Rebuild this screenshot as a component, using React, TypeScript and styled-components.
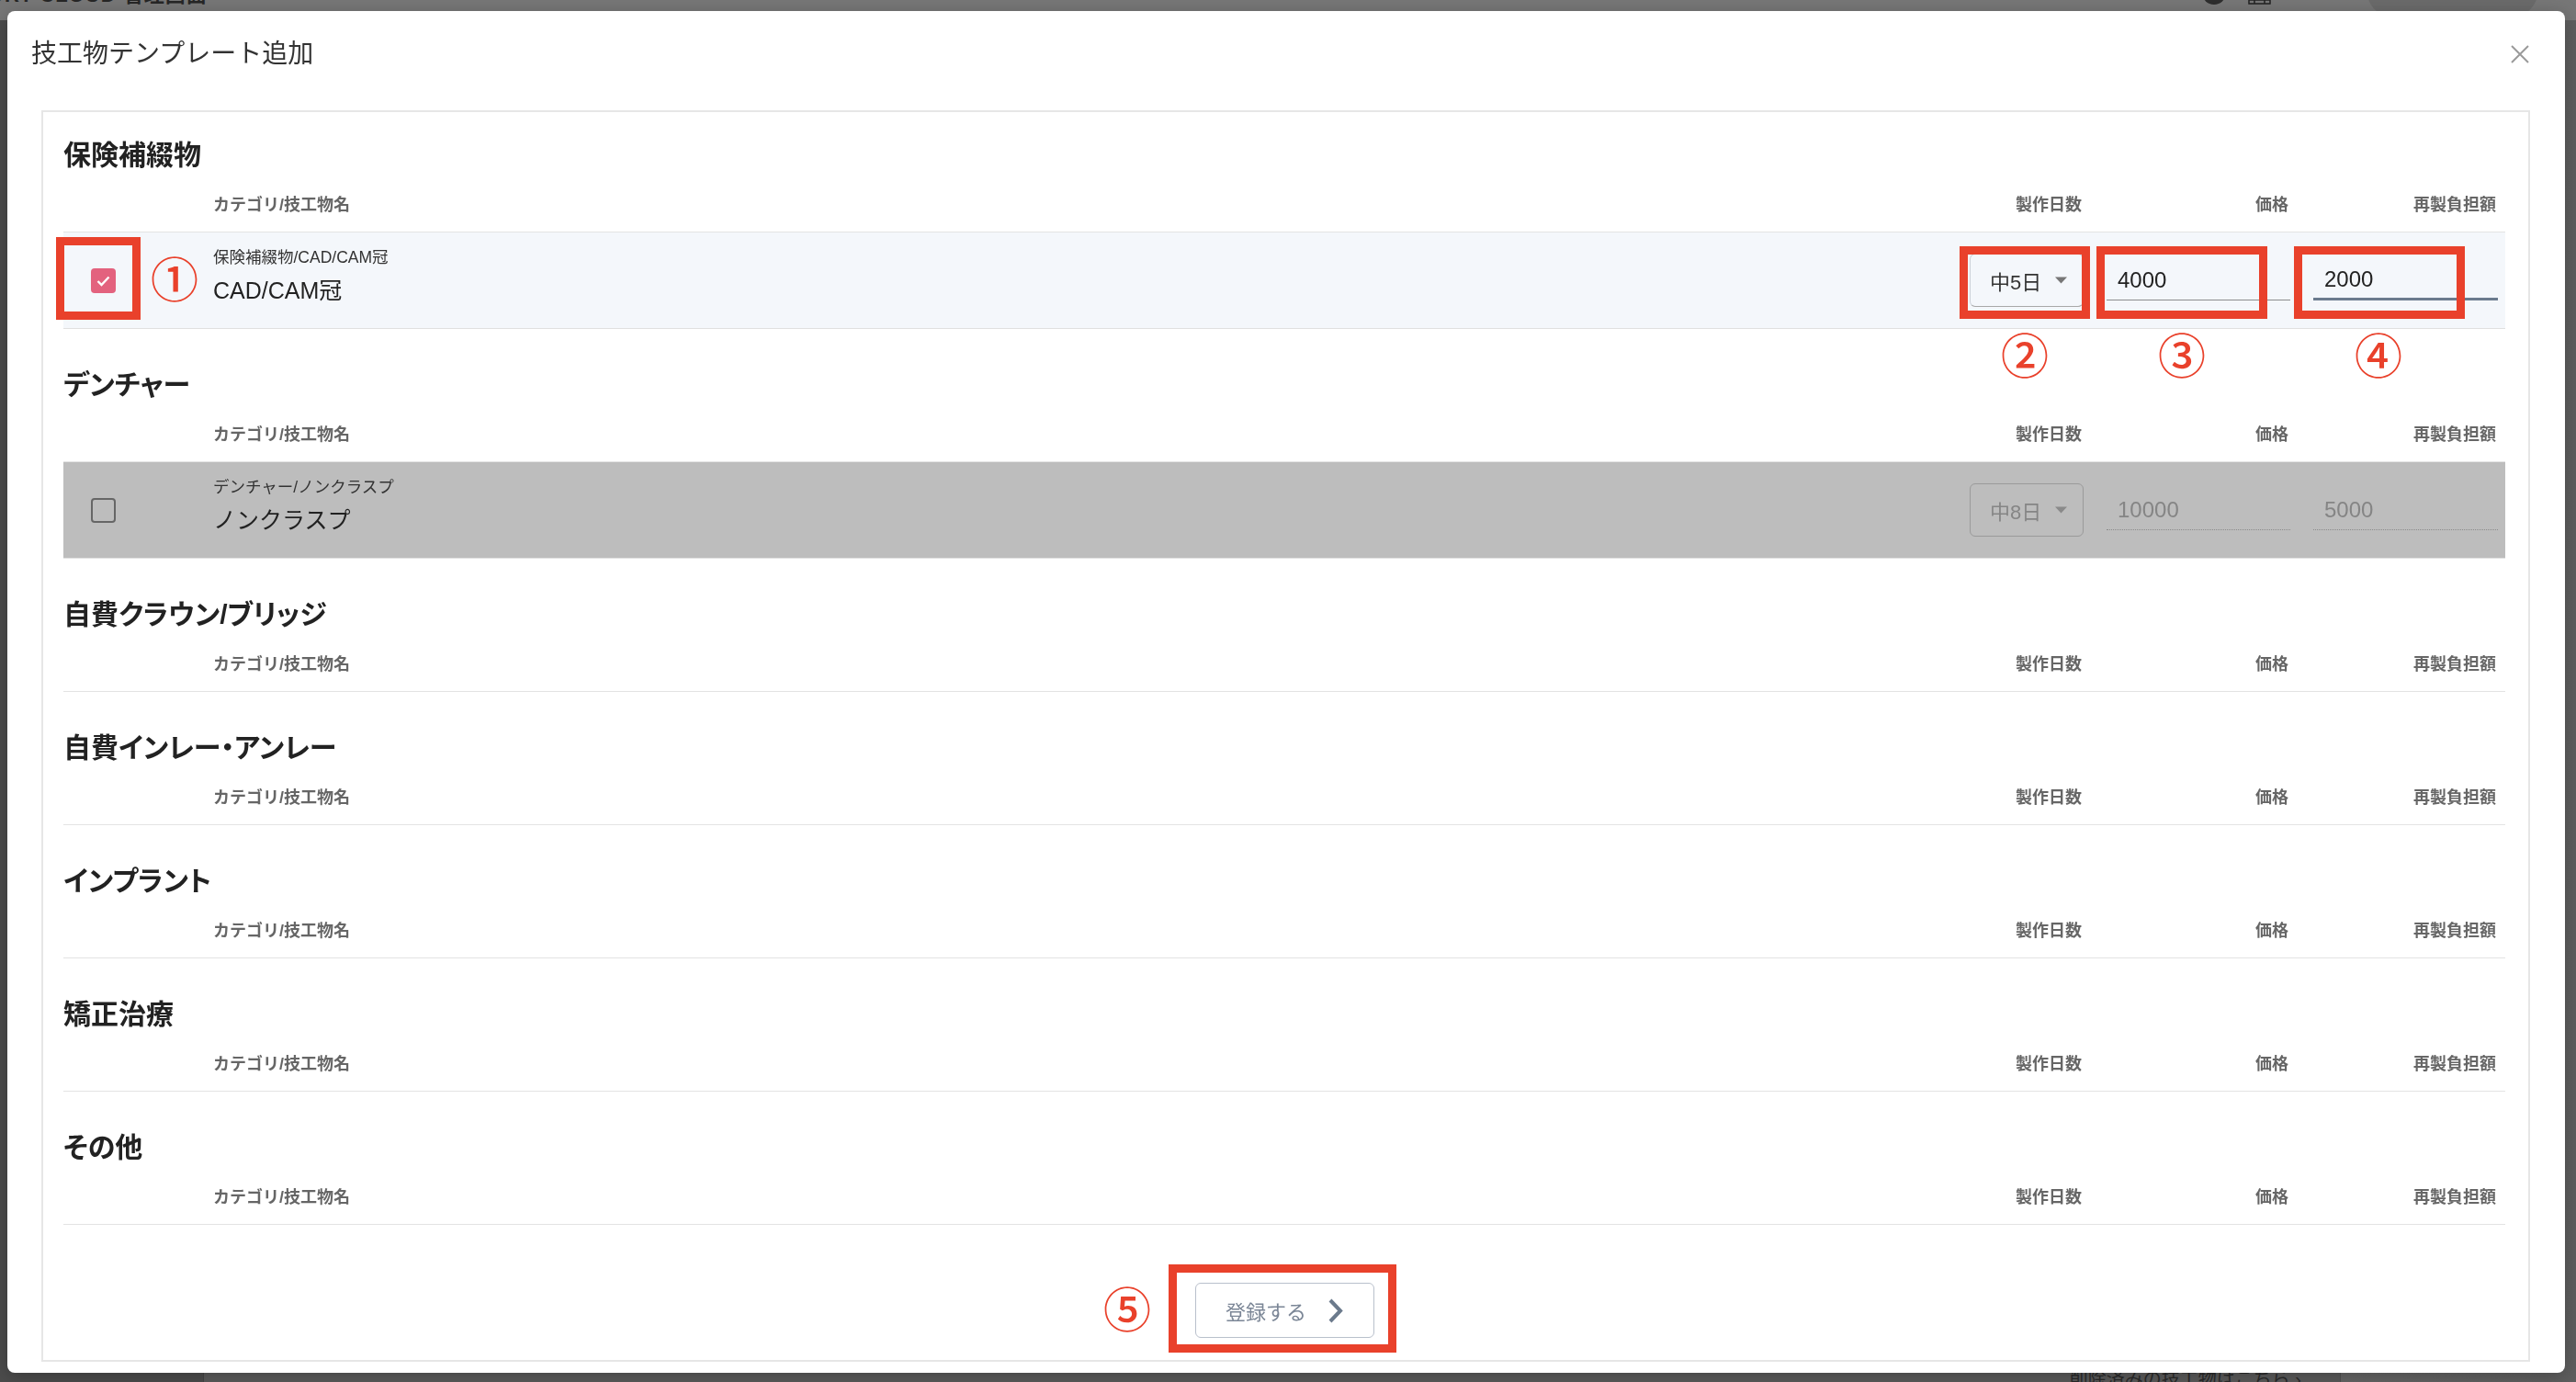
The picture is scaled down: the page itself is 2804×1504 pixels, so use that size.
import React from 'react';
import styled, { createGlobalStyle } from 'styled-components';

const GlobalStyle = createGlobalStyle`
  html, body {
    margin: 0;
    padding: 0;
  }
  body {
    font-family: "Liberation Sans", "Noto Sans CJK JP", sans-serif;
    background: #5b5b5b;
    overflow: hidden;
  }
  * {
    box-sizing: border-box;
  }
`;

type Item = {
  category: string;
  name: string;
  days: string;
  price: string;
  remake: string;
  checked: boolean;
};

type Section = {
  title: string;
  items: Item[];
};

const sections: Section[] = [
  {
    title: '保険補綴物',
    items: [
      { category: '保険補綴物/CAD/CAM冠', name: 'CAD/CAM冠', days: '中5日', price: '4000', remake: '2000', checked: true },
    ],
  },
  {
    title: 'デンチャー',
    items: [
      { category: 'デンチャー/ノンクラスプ', name: 'ノンクラスプ', days: '中8日', price: '10000', remake: '5000', checked: false },
    ],
  },
  { title: '自費クラウン/ブリッジ', items: [] },
  { title: '自費インレー・アンレー', items: [] },
  { title: 'インプラント', items: [] },
  { title: '矯正治療', items: [] },
  { title: 'その他', items: [] },
];

/* ---------- page behind the modal ---------- */

const Page = styled.div`
  display: grid;
  grid-template-rows: auto 1fr;
  height: 100vh;
`;

const TopBar = styled.header`
  display: flex;
  align-items: center;
  height: 60px;
  margin-top: -38px;
  padding: 0 42px 0 0;
  background: #777;
`;

const Brand = styled.div`
  margin-right: auto;
  margin-left: -12px;
  font-size: 22px;
  font-weight: 700;
  letter-spacing: 1px;
  color: #262626;
`;

const InfoDot = styled.span`
  width: 26px;
  height: 26px;
  border-radius: 50%;
  background: #2e2e2e;
`;

const BagIcon = styled.svg`
  margin-left: 23px;
`;

const UserPill = styled.div`
  width: 185px;
  height: 50px;
  margin-left: 104px;
  border-radius: 25px;
  background: #6b6b6b;
`;

const Workspace = styled.div`
  display: grid;
  grid-template-columns: 222px 1fr 256px;
`;

const SideNav = styled.aside`
  background: #4c4c4c;
  border-right: 1px solid #444;
`;

const MainArea = styled.main`
  display: flex;
  align-items: flex-end;
  justify-content: flex-end;
  padding: 0 42px 0 0;
  background: #5b5b5b;
  border-right: 1px solid #505050;
`;

const DeletedLink = styled.span`
  font-size: 20px;
  line-height: 24px;
  color: #2a2a2a;
  transform: translateY(9px);
`;

const RightPanel = styled.aside`
  background: linear-gradient(90deg, #666 0%, #5e5e5e 100%);
`;

/* ---------- modal ---------- */

const Overlay = styled.div`
  position: fixed;
  inset: 0;
  padding: 12px 12px 10px 8px;
`;

const Modal = styled.section`
  display: flex;
  flex-direction: column;
  height: 100%;
  background: #fff;
  border-radius: 8px;
  box-shadow: 0 4px 20px rgba(0, 0, 0, 0.25);
`;

const ModalHeader = styled.div`
  flex: none;
  display: flex;
  justify-content: space-between;
  align-items: flex-start;
  height: 108px;
  padding: 27px 36px 0 26px;
`;

const ModalTitle = styled.h2`
  margin: 0;
  font-size: 28px;
  line-height: 40px;
  font-weight: 400;
  color: #333;
`;

const CloseButton = styled.button`
  width: 26px;
  height: 26px;
  margin-top: 7px;
  padding: 0;
  border: 0;
  background: none;
  cursor: pointer;
`;

const ModalBody = styled.div`
  flex: 1;
  display: flex;
  flex-direction: column;
  margin: 0 38px 12px 37px;
  padding: 25px 25px 24px 22px;
  border: 2px solid #e6e6e6;
`;

const SectionBlock = styled.div`
  & + & {
    margin-top: 39px;
  }
`;

const SectionTitle = styled.h3`
  margin: 0 0 10px;
  font-size: 30px;
  line-height: 44px;
  font-weight: 700;
  color: #222;
  font-feature-settings: "palt";
`;

const Grid = styled.div`
  display: grid;
  grid-template-columns: 138px 1fr 124px 200px 201px;
  column-gap: 25px;
  padding-right: 8px;
`;

const HeaderRow = styled(Grid)`
  height: 52px;
  padding-bottom: 11px;
  align-items: center;
  border-bottom: 1px solid #e3e3e3;
`;

const HeaderCell = styled.div<{ $right?: boolean }>`
  font-size: 18px;
  font-weight: 700;
  color: #666;
  text-align: ${(p) => (p.$right ? 'right' : 'left')};
  padding-right: ${(p) => (p.$right ? '2px' : '0')};
`;

const ItemRow = styled(Grid)<{ $active: boolean }>`
  height: 105px;
  align-items: center;
  background: ${(p) => (p.$active ? '#f4f7fb' : '#bdbdbd')};
  border-bottom: 1px solid #e0e0e0;
`;

const CheckCell = styled.div`
  padding-left: 30px;
  display: flex;
`;

const CheckBox = styled.span<{ $checked: boolean }>`
  display: flex;
  align-items: center;
  justify-content: center;
  width: 27px;
  height: 27px;
  border-radius: 4px;
  background: ${(p) => (p.$checked ? '#e3627e' : 'transparent')};
  border: ${(p) => (p.$checked ? 'none' : '2px solid #666')};
`;

const NameCell = styled.div`
  align-self: start;
  padding-top: 15px;
`;

const Category = styled.div`
  font-size: 17.5px;
  line-height: 24px;
  color: #333;
`;

const ItemName = styled.div`
  margin-top: 7px;
  font-size: 25px;
  line-height: 34px;
  color: #222;
`;

const DaysSelect = styled.div<{ $disabled: boolean }>`
  display: flex;
  align-items: center;
  gap: 15px;
  height: 58px;
  padding-left: 21px;
  border-radius: 6px;
  border: 1px solid ${(p) => (p.$disabled ? '#9a9a9a' : '#ccd1d8')};
  border-bottom-color: ${(p) => (p.$disabled ? '#9a9a9a' : '#a8a8a8')};
  font-size: 22px;
  color: ${(p) => (p.$disabled ? '#858585' : '#333')};
`;

const TextInput = styled.input<{ $focused?: boolean }>`
  width: 100%;
  height: 44px;
  padding: 0 0 0 12px;
  border: 0;
  border-bottom: ${(p) =>
    p.$focused ? '3px solid #6b7b8e' : p.disabled ? '1px dotted #8a8a8a' : '1px solid #8c8c8c'};
  background: transparent;
  font-family: inherit;
  font-size: 24px;
  color: ${(p) => (p.disabled ? '#858585' : '#222')};
  outline: none;
`;

const Footer = styled.div`
  display: flex;
  justify-content: center;
  padding-top: 63px;
`;

const SubmitButton = styled.button`
  display: flex;
  align-items: center;
  justify-content: center;
  gap: 23px;
  width: 195px;
  height: 60px;
  border: 1px solid #b9c0cc;
  border-radius: 6px;
  background: #fff;
  font-family: inherit;
  font-size: 22px;
  color: #7b8696;
  cursor: pointer;
`;

/* ---------- red annotation marks ---------- */

const MarkBox = styled.div<{ $x: number; $y: number; $w: number; $h: number }>`
  position: absolute;
  left: ${(p) => p.$x}px;
  top: ${(p) => p.$y}px;
  width: ${(p) => p.$w}px;
  height: ${(p) => p.$h}px;
  border: 9px solid #e9412b;
  pointer-events: none;
`;

const MarkNumber = styled.span<{ $x: number; $y: number }>`
  position: absolute;
  left: ${(p) => p.$x}px;
  top: ${(p) => p.$y}px;
  transform: translate(-50%, -50%);
  font-family: "Noto Sans CJK JP", sans-serif;
  font-size: 52px;
  font-weight: 500;
  line-height: 1;
  color: #e9412b;
  pointer-events: none;
`;

const Caret = ({ color }: { color: string }) => (
  <svg width="13" height="8" viewBox="0 0 13 8">
    <path d="M0 0.5 H13 L6.5 7.5 Z" fill={color} />
  </svg>
);

const ItemLine: React.FC<{ item: Item }> = ({ item }) => {
  const off = !item.checked;
  return (
    <ItemRow $active={item.checked}>
      <CheckCell>
        <CheckBox $checked={item.checked}>
          {item.checked && (
            <svg width="27" height="27" viewBox="0 0 27 27">
              <polyline points="7.5,14 11.5,18 19.5,9.5" fill="none" stroke="#fff" strokeWidth="2.4" />
            </svg>
          )}
        </CheckBox>
      </CheckCell>
      <NameCell>
        <Category>{item.category}</Category>
        <ItemName>{item.name}</ItemName>
      </NameCell>
      <DaysSelect $disabled={off}>
        {item.days}
        <Caret color={off ? '#8a8a8a' : '#777'} />
      </DaysSelect>
      <TextInput defaultValue={item.price} disabled={off} />
      <TextInput defaultValue={item.remake} disabled={off} $focused={item.checked} />
    </ItemRow>
  );
};

const App: React.FC = () => {
  return (
    <>
      <GlobalStyle />
      <Page>
        <TopBar>
          <Brand>DRY CLOUD 管理画面</Brand>
          <InfoDot />
          <BagIcon width="27" height="26" viewBox="0 0 27 26">
            <path d="M2 25 V14 Q13.5 4 25 14 V25 Z M2 21 H25 M8 21 V25 M19 21 V25" fill="none" stroke="#222" strokeWidth="1.5" />
          </BagIcon>
          <UserPill />
        </TopBar>
        <Workspace>
          <SideNav />
          <MainArea>
            <DeletedLink>削除済みの技工物はこちら ›</DeletedLink>
          </MainArea>
          <RightPanel />
        </Workspace>
      </Page>

      <Overlay>
        <Modal>
          <ModalHeader>
            <ModalTitle>技工物テンプレート追加</ModalTitle>
            <CloseButton aria-label="close">
              <svg width="26" height="26" viewBox="0 0 26 26">
                <path d="M4 4 L22 22 M22 4 L4 22" stroke="#9a9a9a" strokeWidth="2" />
              </svg>
            </CloseButton>
          </ModalHeader>
          <ModalBody>
            {sections.map((s) => (
              <SectionBlock key={s.title}>
                <SectionTitle>{s.title}</SectionTitle>
                <HeaderRow>
                  <span />
                  <HeaderCell>カテゴリ/技工物名</HeaderCell>
                  <HeaderCell $right>製作日数</HeaderCell>
                  <HeaderCell $right>価格</HeaderCell>
                  <HeaderCell $right>再製負担額</HeaderCell>
                </HeaderRow>
                {s.items.map((it) => (
                  <ItemLine key={it.name} item={it} />
                ))}
              </SectionBlock>
            ))}
            <Footer>
              <SubmitButton>
                登録する
                <svg width="17" height="27" viewBox="0 0 17 27">
                  <polyline points="3,2 14,13.5 3,25" fill="none" stroke="#6b7a8c" strokeWidth="4" />
                </svg>
              </SubmitButton>
            </Footer>
          </ModalBody>
        </Modal>

        <MarkBox $x={61} $y={258} $w={92} $h={90} />
        <MarkNumber $x={190} $y={302}>①</MarkNumber>
        <MarkBox $x={2133} $y={268} $w={142} $h={79} />
        <MarkBox $x={2282} $y={268} $w={186} $h={79} />
        <MarkBox $x={2497} $y={268} $w={186} $h={79} />
        <MarkNumber $x={2204} $y={385}>②</MarkNumber>
        <MarkNumber $x={2375} $y={385}>③</MarkNumber>
        <MarkNumber $x={2589} $y={385}>④</MarkNumber>
        <MarkBox $x={1272} $y={1376} $w={248} $h={96} />
        <MarkNumber $x={1227} $y={1423}>⑤</MarkNumber>
      </Overlay>
    </>
  );
};

export default App;
